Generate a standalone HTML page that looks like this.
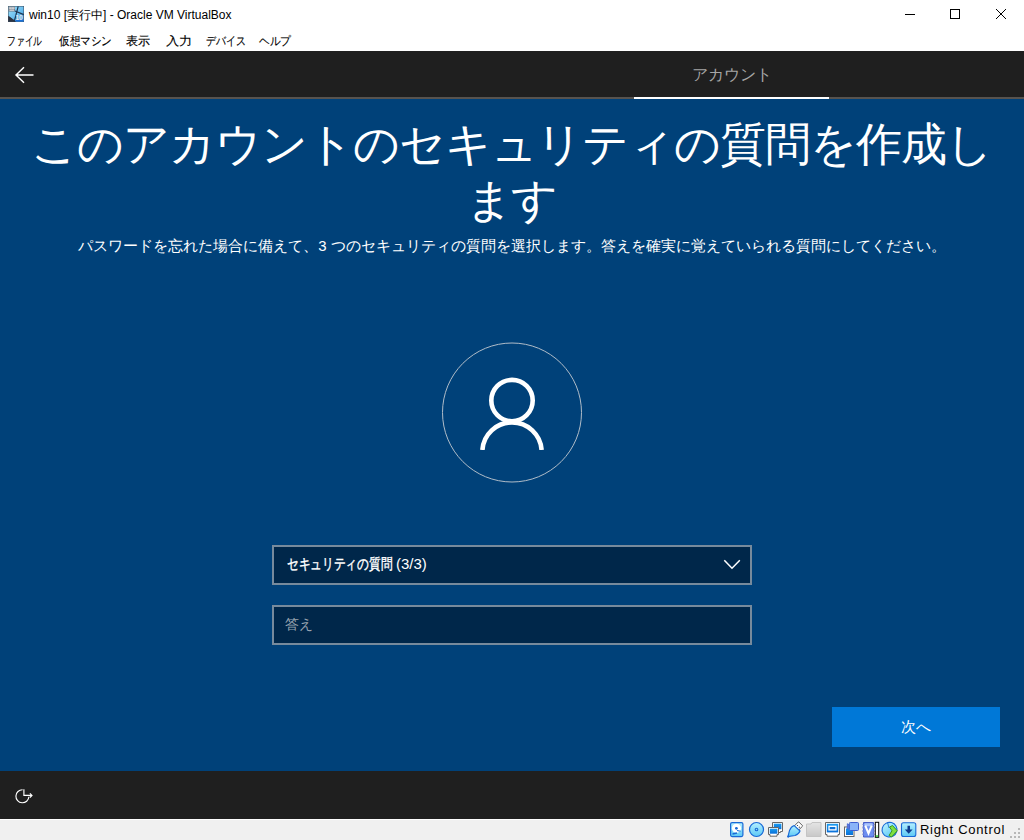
<!DOCTYPE html>
<html lang="ja"><head><meta charset="utf-8">
<style>
*{margin:0;padding:0;box-sizing:border-box}
html,body{width:1024px;height:840px;overflow:hidden;background:#fff;font-family:"Liberation Sans",sans-serif}
.abs{position:absolute;white-space:nowrap}
#title{left:0;top:0;width:1024px;height:30px;background:#fff}
#ttext{left:29px;top:7px;font-size:12px;line-height:16px;color:#000}
.mi{transform-origin:0 0;top:33px;font-size:12px;line-height:16px;color:#000;-webkit-text-stroke:0.15px #000}
#hdr{left:0;top:51px;width:1024px;height:46px;background:#1f1f1f}
#hline{left:0;top:97px;width:1024px;height:2px;background:#57534f}
#uline{left:634px;top:97px;width:195px;height:2px;background:#fff}
#acct{left:634px;top:65px;width:195px;text-align:center;color:#a6a6a6;font-size:16px;line-height:20px}
#body{left:0;top:99px;width:1024px;height:672px;background:#004179}
#foot{left:0;top:771px;width:1024px;height:48px;background:#1f1f1f}
#status{left:0;top:819px;width:1024px;height:21px;background:#f0f0f0}
#h1{left:-0.5px;top:115.5px;width:1024px;text-align:center;color:#fff;font-size:46px;line-height:56px;letter-spacing:-1.07px}
#sub{left:0;top:236px;width:1024px;text-align:center;color:#fff;font-size:15px;line-height:20px}
.box{left:272px;width:480px;height:40px;border:2px solid #778a9c;background:#00274a}
#dd{top:545px}
#ans{top:605px}
#ddtext{left:287px;top:555px;color:#fff;font-size:15px;line-height:18px;-webkit-text-stroke:0.4px #fff;transform-origin:0 0;transform:scaleX(0.78)}
#ddnum{left:396px;top:555px;color:#fff;font-size:15px;line-height:18px}
#anstext{left:285px;top:615px;color:#9aa5b1;font-size:14px;line-height:18px}
#btn{left:832px;top:707px;width:168px;height:40px;background:#0078d7;color:#fff;font-size:15px;text-align:center;line-height:40px}
#rc{left:920px;top:822px;font-size:13px;line-height:15px;color:#000;letter-spacing:0.7px}
</style></head><body>
<div id="title" class="abs"></div>
<svg class="abs" style="left:8px;top:6px" width="16" height="16" viewBox="0 0 16 16">
<defs><linearGradient id="ic1" x1="0" y1="0" x2="1" y2="1"><stop offset="0" stop-color="#9fe3fb"/><stop offset="1" stop-color="#3d9fe3"/></linearGradient></defs>
<rect x="0" y="0" width="16" height="16" fill="#3a4658"/>
<polygon points="0.5,0.5 15.5,0.5 15.5,15.5 8,15.5 0.5,10" fill="url(#ic1)"/>
<rect x="0.5" y="0.5" width="6.5" height="5" fill="#6c7480"/>
<rect x="1.3" y="1.3" width="1.5" height="1.5" fill="#fff"/><rect x="3.3" y="1.3" width="1.5" height="1.5" fill="#fff"/><rect x="5.2" y="1.3" width="1.3" height="1.5" fill="#fff"/>
<rect x="1.3" y="3.6" width="5" height="1" fill="#fff"/>
<polygon points="0.5,10 8,15.5 0.5,15.5" fill="#2c3442"/>
<path d="M10.2,0.3 L6.2,15.7 M7,5 L15.8,8.6" stroke="#1f3550" stroke-width="1.2"/>
<rect x="7.5" y="13.5" width="8" height="2" fill="#1a6fd8"/>
<text x="7.6" y="13.6" font-size="6.5" font-weight="bold" fill="#e8e8e8" font-family="Liberation Sans" letter-spacing="-0.3">10</text>
</svg>
<div id="ttext" class="abs">win10 [実行中] - Oracle VM VirtualBox</div>
<svg class="abs" style="left:900px;top:4px" width="112" height="20" viewBox="0 0 112 20">
<path d="M5,10.5 H15" stroke="#000" stroke-width="1"/>
<rect x="50.5" y="5.5" width="9" height="9" fill="none" stroke="#000" stroke-width="1"/>
<path d="M96,5 L106,15 M106,5 L96,15" stroke="#000" stroke-width="1"/>
</svg>
<div class="abs mi" style="left:7px;transform:scaleX(0.73)">ファイル</div>
<div class="abs mi" style="left:58.5px;transform:scaleX(0.88)">仮想マシン</div>
<div class="abs mi" style="left:126px">表示</div>
<div class="abs mi" style="left:165.5px;transform:scaleX(1.1)">入力</div>
<div class="abs mi" style="left:205.5px;transform:scaleX(0.83)">デバイス</div>
<div class="abs mi" style="left:259px;transform:scaleX(0.89)">ヘルプ</div>
<div id="hdr" class="abs"></div>
<svg class="abs" style="left:10px;top:62px" width="30" height="26" viewBox="10 62 30 26">
<path d="M15.5,75 H33.5 M24,67.2 L16,75 L24,82.8" fill="none" stroke="#fff" stroke-width="1.45"/>
</svg>
<div id="acct" class="abs">アカウント</div>
<div id="hline" class="abs"></div>
<div id="uline" class="abs"></div>
<div id="body" class="abs"></div>
<div id="h1" class="abs">このアカウントのセキュリティの質問を作成し<br>ます</div>
<div id="sub" class="abs">パスワードを忘れた場合に備えて、3 つのセキュリティの質問を選択します。答えを確実に覚えていられる質問にしてください。</div>
<svg class="abs" style="left:432px;top:332px" width="160" height="160" viewBox="432 332 160 160">
<circle cx="512" cy="412.5" r="69.5" fill="none" stroke="#b0bcc8" stroke-width="1"/>
<circle cx="512" cy="400.6" r="20.7" fill="none" stroke="#fff" stroke-width="4.6"/>
<path d="M482.37,450 A29.7,29.7 0 0 1 541.63,450" fill="none" stroke="#fff" stroke-width="4.6"/><rect x="470" y="450" width="84" height="6" fill="#004179"/>
</svg>
<div id="dd" class="abs box"></div>
<div id="ddtext" class="abs">セキュリティの質問</div><div id="ddnum" class="abs">(3/3)</div>
<svg class="abs" style="left:720px;top:554px" width="24" height="20" viewBox="720 554 24 20">
<path d="M724.3,560.2 L732,568.2 L739.8,560.2" fill="none" stroke="#fff" stroke-width="1.5"/>
</svg>
<div id="ans" class="abs box"></div>
<div id="anstext" class="abs">答え</div>
<div id="btn" class="abs">次へ</div>
<div id="foot" class="abs"></div>
<svg class="abs" style="left:8px;top:782px" width="32" height="28" viewBox="8 782 32 28">
<path d="M22.6,789.8 A6.5,6.5 0 1 0 28.9,796.8" fill="none" stroke="#fff" stroke-width="1.15"/>
<path d="M23.9,789.3 V795.4 H31.8 M29.9,793.3 L32,795.4 L29.9,797.5" fill="none" stroke="#fff" stroke-width="1.15"/>
</svg>
<div id="status" class="abs"></div>
<div id="statline" class="abs" style="left:0;top:819px;width:1024px;height:1px;background:#fff"></div>
<svg class="abs" style="left:720px;top:819px" width="304" height="21" viewBox="720 819 304 21">
<defs>
<linearGradient id="lb" x1="0" y1="0" x2="0" y2="1"><stop offset="0" stop-color="#b5f0ff"/><stop offset="1" stop-color="#5cc8f5"/></linearGradient>
<linearGradient id="gb" x1="0" y1="0" x2="0" y2="1"><stop offset="0" stop-color="#1a9cf0"/><stop offset="1" stop-color="#0a6fd8"/></linearGradient>
<linearGradient id="gg" x1="0" y1="0" x2="0" y2="1"><stop offset="0" stop-color="#e4e4e4"/><stop offset="1" stop-color="#c8c8c8"/></linearGradient>
</defs>
<!-- HDD -->
<rect x="730.6" y="822.6" width="12.3" height="14" rx="1.5" fill="url(#lb)" stroke="#1869d6" stroke-width="1.2"/>
<circle cx="736.5" cy="828.3" r="4.6" fill="#fff"/>
<circle cx="736.4" cy="828.3" r="1.4" fill="#1869d6"/>
<path d="M737,830.5 L740.5,831.2" stroke="#1869d6" stroke-width="1.1"/>
<path d="M732.5,834 L737,833" stroke="#1869d6" stroke-width="1.3"/>
<!-- CD -->
<circle cx="756.5" cy="829.5" r="7" fill="url(#lb)" stroke="#1869d6" stroke-width="1.2"/>
<circle cx="756.5" cy="829.5" r="1.3" fill="none" stroke="#1869d6" stroke-width="1.1"/>
<!-- Network -->
<path d="M772.5,822.5 H782.5 V831.5 H780.5 V832.5 H774.5 V831.5 H772.5 Z" fill="#fff" stroke="#666" stroke-width="1"/>
<rect x="773.8" y="823.7" width="7.6" height="5.5" fill="url(#gb)"/>
<path d="M768.5,827.5 H778.5 V834.5 H777 V836.2 H770 V834.5 H768.5 Z" fill="#fff" stroke="#666" stroke-width="1"/>
<rect x="769.8" y="828.7" width="7.6" height="5" fill="url(#gb)"/>
<!-- USB -->
<rect x="795.2" y="822.8" width="6" height="7" rx="0.5" transform="rotate(45 798.2 826.3)" fill="#fff" stroke="#555" stroke-width="0.9"/>
<path d="M788,836.5 L789.5,830.5 Q791,826.5 794.2,825.5 L800,831 Q799,834 795,835.5 Z" fill="url(#lb)" stroke="#1869d6" stroke-width="1.1"/>
<circle cx="788.3" cy="836.6" r="1.1" fill="#1869d6"/>
<circle cx="797.5" cy="825.5" r="0.6" fill="#333"/><circle cx="799.3" cy="827.2" r="0.6" fill="#333"/>
<!-- Folder gray -->
<path d="M806.5,824 H811 L812,822.5 H821 V836.5 H806.5 Z" fill="url(#gg)" stroke="#c4c4c4" stroke-width="1"/>
<!-- Display -->
<path d="M825.5,822.5 H839.5 V834.5 H838 V836.2 H827 V834.5 H825.5 Z" fill="#fff" stroke="#666" stroke-width="1"/>
<rect x="826.8" y="823.8" width="11.4" height="8.6" fill="url(#gb)"/>
<rect x="829" y="826.3" width="7" height="3.6" fill="#0a72d8" stroke="#fff" stroke-width="1.3"/>
<!-- Shared -->
<rect x="844.5" y="827" width="9.5" height="9.5" fill="#fff" stroke="#666" stroke-width="1"/>
<rect x="846" y="828.5" width="7" height="6.5" fill="url(#gb)"/>
<rect x="849.3" y="822.5" width="9.2" height="8" rx="1" fill="#8ab4f8" stroke="#3f5fcf" stroke-width="1"/>
<path d="M847.3,823.7 L849.3,825 L849.3,828.3 L847.3,829.3 Z" fill="#5a7be0" stroke="#3f5fcf" stroke-width="0.8"/>
<!-- V recording -->
<path d="M863.5,822.5 H873.5 V824 L874,824.7 L873.5,825.4 L874,826.1 L873.5,826.8 L874,827.5 L873.5,828.2 L874,828.9 L873.5,829.6 L874,830.3 L873.5,831 L874,831.7 L873.5,832.4 L874,833.1 L873.5,833.8 L874,834.5 L873.5,835.2 V837 H863.5 V835.2 L863,834.5 L863.5,833.8 L863,833.1 L863.5,832.4 L863,831.7 L863.5,831 L863,830.3 L863.5,829.6 L863,828.9 L863.5,828.2 L863,827.5 L863.5,826.8 L863,826.1 L863.5,825.4 L863,824.7 L863.5,824 Z" fill="#6d8ef0" stroke="#3b52c4" stroke-width="0.9"/>
<rect x="864.5" y="823.3" width="8" height="3" rx="1" fill="#a9c4fb"/>
<path d="M865.3,825.7 L868.5,833.3 L871.7,825.7" fill="none" stroke="#fff" stroke-width="2.1"/>
<rect x="875.3" y="822.3" width="3.4" height="15" fill="#fff" stroke="#000" stroke-width="1"/>
<rect x="875.8" y="835.3" width="2.4" height="1.5" fill="#3c3"/>
<!-- Globe -->
<ellipse cx="889.5" cy="829.7" rx="7.5" ry="7.3" transform="rotate(-30 889.5 829.7)" fill="url(#lb)" stroke="#1869d6" stroke-width="1.1"/>
<path d="M887.5,822.5 L889,828" stroke="#1869d6" stroke-width="0.8"/>
<path d="M889.5,827 L892.5,825.5 L897.3,830.8 L891.5,837 L889,835.5 L892,830.8 Z" fill="#7fe040" stroke="#2f8f10" stroke-width="0.9"/>
<!-- Download -->
<rect x="901.5" y="822.7" width="14.3" height="13.8" rx="2" fill="url(#lb)" stroke="#1869d6" stroke-width="1.1"/>
<path d="M907.5,825.8 H910 V829.5 H912.6 L908.7,833.7 L904.8,829.5 H907.5 Z" fill="#0d3a8c"/>
<!-- grip -->
<g fill="#b8b8b8"><rect x="1018" y="828" width="2" height="2"/><rect x="1014" y="832" width="2" height="2"/><rect x="1018" y="832" width="2" height="2"/><rect x="1010" y="836" width="2" height="2"/><rect x="1014" y="836" width="2" height="2"/><rect x="1018" y="836" width="2" height="2"/></g>
</svg>
<div id="rc" class="abs">Right Control</div>
</body></html>
